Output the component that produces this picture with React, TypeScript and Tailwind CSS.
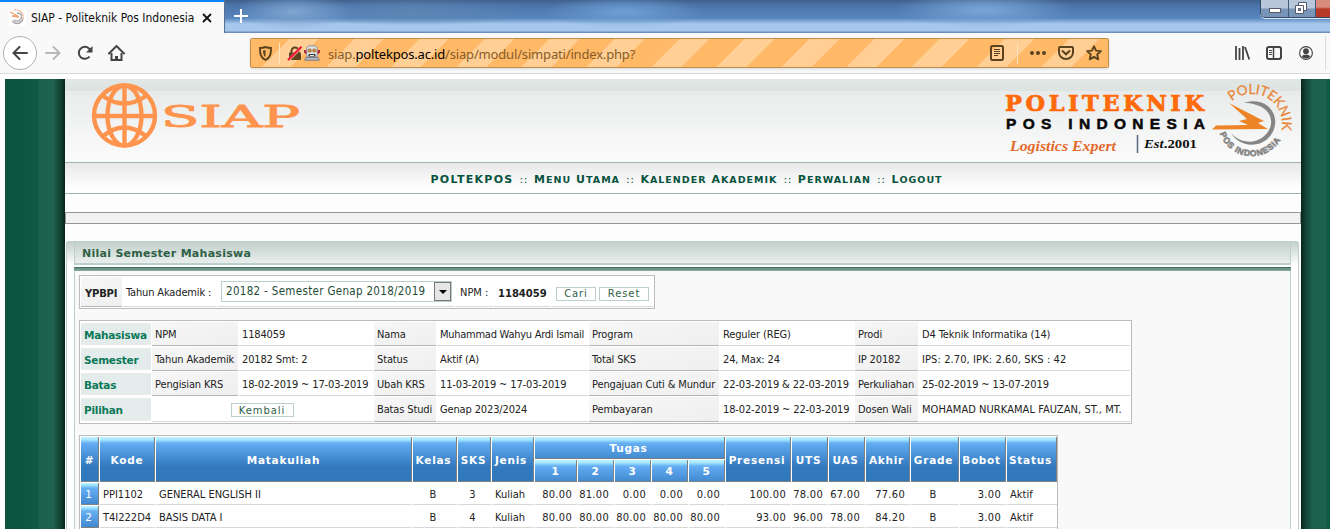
import React from 'react';

const ui = "font-['DejaVu_Sans_Condensed','DejaVu_Sans',sans-serif] [font-stretch:condensed]";
const vd = "font-['DejaVu_Sans',sans-serif] font-bold [font-stretch:normal]";

const infoRows: string[][] = [
  ['Mahasiswa', 'NPM', '1184059', 'Nama', 'Muhammad Wahyu Ardi Ismail', 'Program', 'Reguler (REG)', 'Prodi', 'D4 Teknik Informatika (14)'],
  ['Semester', 'Tahun Akademik', '20182 Smt: 2', 'Status', 'Aktif (A)', 'Total SKS', '24, Max: 24', 'IP 20182', 'IPS: 2.70, IPK: 2.60, SKS : 42'],
  ['Batas', 'Pengisian KRS', '18-02-2019 ~ 17-03-2019', 'Ubah KRS', '11-03-2019 ~ 17-03-2019', 'Pengajuan Cuti & Mundur', '22-03-2019 & 22-03-2019', 'Perkuliahan', '25-02-2019 ~ 13-07-2019'],
  ['Pilihan', '', 'Kembali', 'Batas Studi', 'Genap 2023/2024', 'Pembayaran', '18-02-2019 ~ 22-03-2019', 'Dosen Wali', 'MOHAMAD NURKAMAL FAUZAN, ST., MT.'],
];
const lastColumnTracking = ['tracking-[-0.1px]', 'tracking-[0.1px]', 'tracking-[-0.12px]', 'tracking-[0.06px]'];

const courses: string[][] = [
  ['1', 'PPI1102', 'GENERAL ENGLISH II', 'B', '3', 'Kuliah', '80.00', '81.00', '0.00', '0.00', '0.00', '100.00', '78.00', '67.00', '77.60', 'B', '3.00', 'Aktif'],
  ['2', 'T4I222D4', 'BASIS DATA I', 'B', '4', 'Kuliah', '80.00', '80.00', '80.00', '80.00', '80.00', '93.00', '96.00', '78.00', '84.20', 'B', '3.00', 'Aktif'],
];
const centered = [3, 4, 15];
const right = [6, 7, 8, 9, 10, 11, 12, 13, 14, 16];

function Button({ children, className }: { children: React.ReactNode; className: string }) {
  return (
    <button className={`${className} flex h-[14px] items-center justify-center border border-[#bccfca] bg-white pt-px font-['DejaVu_Sans',sans-serif] text-[10px] leading-none tracking-[0.9px] text-[#2f6046] [font-stretch:normal]`}>
      {children}
    </button>
  );
}

function Head({ children, className = '' }: { children: React.ReactNode; className?: string }) {
  return (
    <div className={`${vd} ${className} flex items-center justify-center overflow-hidden whitespace-nowrap border-b border-r border-[#808080] bg-[linear-gradient(180deg,#c4f2ff_0px,#a0e4ff_3px,#67b0f4_6px,#5ba3ea_10px,#3178bd_30px)] pt-[2px] text-[10.5px] leading-none tracking-[0.75px] text-white`}>
      {children}
    </div>
  );
}

function BrowserTop() {
  return (
    <>
      <div className="flex h-[33px] bg-[linear-gradient(180deg,#3f608b_0px,#4b73a8_5px,#5685bd_18px,#a8c8eb_24px,#a6c6ec_31px,#6b8fba_32px)]">
        <div className={`${ui} flex h-[33px] w-[224px] items-center border-t-2 border-t-[#0a84ff] bg-[#f9f9f9] pl-[9px] shadow-[1px_0_0_#57708f]`}>
          <svg width="17" height="17" viewBox="0 0 17 17" className="bg-white" fill="none">
            <path d="M1 3l8 4-6 0 7 1" stroke="#f0a070" strokeWidth="1.3" />
            <path d="M5 1c7-1 10 4 9 9" stroke="#f0b490" strokeWidth="1.3" strokeDasharray="2 .6" />
            <path d="M8 4c5 0 6 4 3 7-2 2-5 1-6 0M3 12c4 4 9 3 11-2" stroke="#a5a5a5" strokeWidth="1.3" />
          </svg>
          <span className="ml-[5px] w-[163px] whitespace-nowrap text-[12px] tracking-[-0.02px] text-[#111]">SIAP - Politeknik Pos Indonesia</span>
          <svg width="10" height="10" viewBox="0 0 10 10" className="ml-[8px]"><path d="M1 1l8 8M9 1L1 9" stroke="#111" strokeWidth="1.8" /></svg>
        </div>
        <div className="flex flex-1 justify-between bg-[radial-gradient(ellipse_60px_18px_at_70px_12px,#7fa5d0,transparent),radial-gradient(ellipse_120px_14px_at_190px_12px,#5d86b3,transparent),radial-gradient(ellipse_80px_16px_at_400px_12px,#6e9fd4,transparent),radial-gradient(ellipse_90px_18px_at_760px_10px,#7aa5d8,transparent)]">
          <svg width="14" height="14" viewBox="0 0 14 14" className="ml-[10px] mt-[9px]"><path d="M7 0v14M0 7h14" stroke="#fff" strokeWidth="2" /></svg>
          <div className="flex h-[18px] w-[70px] overflow-hidden rounded-bl-[5px] border-b border-l border-[#344b68] bg-[#8ca9c9] shadow-[0_1px_0_#d7e7f7]">
            <div className="w-[28px] border-r border-[#415b7b] bg-[linear-gradient(180deg,#b8c8da_8px,#7895b7_9px)] pl-[8px] pt-[8px]"><div className="h-[5px] w-[12px] border border-[#555a68] bg-white" /></div>
            <div className="w-[27px] border-r border-[#415b7b] bg-[linear-gradient(180deg,#b8c8da_8px,#7895b7_9px)] pl-[6px] pt-[2px]">
              <svg width="13" height="13" viewBox="0 0 13 13"><path d="M3.5.5h8v8h-8z" fill="#fff" stroke="#555a68" /><path d="M.5 3.500h8v8h-8z" fill="#fff" stroke="#555a68" /><path d="M3.500 6.500h2v2h-2z" fill="#8298b5" stroke="#555a68" /></svg>
            </div>
            <div className="flex-1 bg-[linear-gradient(180deg,#d98b7d_7px,#b83b2a_9px)]" />
          </div>
        </div>
      </div>
      <div className="flex h-[41px] items-center border-b border-[#dadadc] bg-[#f9f9f9]">
        <div className="ml-[3px] flex size-[34px] shrink-0 items-center justify-center rounded-full border border-[#b0b0b0] bg-white">
          <svg width="16" height="14" viewBox="0 0 16 14" fill="none" stroke="#444" strokeWidth="2"><path d="M15 7H1.500M7.500 1l-6 6 6 6" strokeLinecap="round" /></svg>
        </div>
        <svg className="ml-[8px]" width="16" height="14" viewBox="0 0 16 14" fill="none" stroke="#b8b8b9" strokeWidth="2"><path d="M1 7h13.500M8.500 1l6 6-6 6" strokeLinecap="round" /></svg>
        <svg className="ml-[16px]" width="16" height="16" viewBox="0 0 16 16" fill="none" stroke="#444" strokeWidth="2"><path d="M12.600 11.500A6 6 0 1 1 12 3.500L14 6" /><path d="M15.500 1v6.500H9z" fill="#444" stroke="none" /></svg>
        <svg className="ml-[15px]" width="17" height="16" viewBox="0 0 17 16" fill="none" stroke="#444" strokeWidth="2"><path d="M1 8.500L8.500 1 16 8.500" strokeLinecap="round" /><path d="M3.500 8v7h10V8" /><path d="M8.500 15v-4" strokeWidth="3" /></svg>
        <div className="ml-[125px] flex h-[30px] w-[859px] shrink-0 items-center rounded-[2px] border border-[#c08e4a] bg-[repeating-linear-gradient(135deg,#ffcf95_0px,#ffcf95_2px,#ffb967_2px,#ffb967_27px,#ffcf95_27px,#ffcf95_46px)] shadow-[0_1px_3px_#0002]">
          <svg className="ml-[8px]" width="13" height="15" viewBox="0 0 13 15" fill="none" stroke="#5b4320" strokeWidth="1.900"><path d="M6.500 1c2 .8 3.500 1 5.500 1 0 6-.6 9.500-5.500 12C1.600 11.500 1 8 1 2c2 0 3.500-.2 5.500-1z" /><path d="M6.500 4v7C4.500 10 4 7 4 4.500z" fill="#5b4320" stroke="none" /></svg>
          <div className="ml-[7px] h-[21px] w-px bg-[#ffe4c0]" />
          <svg className="ml-[7px]" width="16" height="15" viewBox="0 0 16 15"><path d="M4.500 7V5a3.500 3.500 0 0 1 7 0v2" fill="none" stroke="#5b4320" strokeWidth="2" /><rect x="2" y="6.500" width="12" height="7.500" rx="1" fill="#5b4320" /><path d="M1 14.500L14.500 1" stroke="#ffbd70" strokeWidth="3" /><path d="M1 14L14.500.8" stroke="#f01044" strokeWidth="1.900" /></svg>
          <svg className="ml-px" width="16" height="16" viewBox="0 0 16 16"><path d="M0 5.500h2.500v3H1.500L0 7zM16 5.500h-2.500v3h1L16 7z" fill="#c51c35" stroke="#8c1428" strokeWidth=".5" /><path d="M4.500.8h7l1.700 2v9.400H2.800V2.800z" fill="#dfe1e5" stroke="#787d88" strokeWidth=".8" /><path d="M2 12.500h12l1.300 2.700H.7z" fill="#b7bcc6" stroke="#676c78" strokeWidth=".8" /><circle cx="5.800" cy="5.500" r="1.600" fill="#f38d1c" stroke="#59472d" strokeWidth=".6" /><circle cx="10.200" cy="5.500" r="1.600" fill="#f38d1c" stroke="#59472d" strokeWidth=".6" /><path d="M4.500 11.500v-1.700l1-.8h5l1 .8v1.700z" fill="#333" /><path d="M6 10.500h4" stroke="#eee" /></svg>
          <div className="ml-[8px] whitespace-nowrap pt-[2px] font-['Noto_Sans',sans-serif] text-[13px] leading-none tracking-[-0.17px] text-[#875c28]">siap.<span className="text-black">poltekpos.ac.id</span>/siap/modul/simpati/index.php?</div>
          <div className="ml-auto mr-[6px] flex items-center text-[#5b4320]">
            <svg width="14" height="16" viewBox="0 0 14 16" fill="none" stroke="currentColor"><rect x="1" y="1" width="12" height="14" rx="1.500" strokeWidth="2" /><path d="M4 4.500h6M4 6.500h6M4 8.500h6M4 10.500h4" /></svg>
            <div className="ml-[13px] h-[21px] w-px bg-[#ffe4c0]" />
            <svg className="ml-[12px]" width="16" height="4" viewBox="0 0 16 4" fill="currentColor"><circle cx="2" cy="2" r="2" /><circle cx="8" cy="2" r="2" /><circle cx="14" cy="2" r="2" /></svg>
            <svg className="ml-[12px]" width="16" height="14" viewBox="0 0 16 14" fill="none" stroke="currentColor" strokeWidth="2"><path d="M2 1h12c.7 0 1 .4 1 1v4.500C15 10 12 13 8 13S1 10 1 6.500V2c0-.6.3-1 1-1z" /><path d="M4.500 5L8 8.300 11.500 5" strokeLinecap="round" /></svg>
            <svg className="ml-[12px]" width="16" height="16" viewBox="0 0 16 16" fill="none" stroke="currentColor" strokeWidth="1.800" strokeLinejoin="round"><path d="M8 1.200l2 4.500 4.900.5-3.700 3.300 1.100 4.900L8 11.900l-4.300 2.500 1.100-4.900L1.100 6.200 6 5.700z" /></svg>
          </div>
        </div>
        <svg className="ml-[126px] shrink-0" width="15" height="14" viewBox="0 0 15 14" stroke="#444" strokeWidth="1.800"><path d="M1 0v14M4.500 2v12M8 0v14M10 1l4.300 12.500" /></svg>
        <svg className="ml-[16px] shrink-0" width="16" height="14" viewBox="0 0 16 14" fill="none" stroke="#444"><rect x="1" y="1" width="14" height="12" rx="2" strokeWidth="2" /><path d="M7.500 1v12" strokeWidth="1.500" /><path d="M3 4.500h3M3 6.500h3M3 8.500h3" /></svg>
        <svg className="ml-[17px] shrink-0" width="14" height="14" viewBox="0 0 14 14"><circle cx="7" cy="7" r="6.400" fill="none" stroke="#444" strokeWidth="1.100" /><circle cx="7" cy="5.200" r="2.900" fill="#444" /><path d="M2.800 10.800c1-3.200 7.400-3.200 8.400 0C9 13 5 13 2.800 10.800z" fill="#444" /></svg>
        <div className="ml-[12px] h-[34px] w-px bg-[#dcdcdc]" />
      </div>
    </>
  );
}

function SiteHeader() {
  return (
    <div className="flex h-[83px] shrink-0 justify-between bg-[linear-gradient(180deg,#e0e7e4_0px,#dce3e1_12px,#e8ebea_12px,#fafafa_75px)]">
      <svg className="ml-[26px] mt-[3px]" width="212" height="68" viewBox="0 0 212 68">
        <g fill="none" stroke="#ff944f" strokeWidth="4.400"><ellipse cx="33.500" cy="33.500" rx="30.500" ry="30" /><ellipse cx="33.500" cy="33.500" rx="17" ry="30" /><path d="M33.500 3v61M3 34h61" /><path d="M12 14q21 15 43 0M12 54q21-17 43 0" /></g>
        <text x="70" y="45" textLength="139" lengthAdjust="spacingAndGlyphs" fontFamily="DejaVu Serif" fontSize="30" fill="#ff944f" stroke="#ff944f" strokeWidth=".9">SIAP</text>
      </svg>
      <svg className="mr-[6px] mt-[2px]" width="293" height="80" viewBox="1002 81 293 80">
        <text x="1005" y="111" textLength="199" lengthAdjust="spacing" fontFamily="DejaVu Serif" fontWeight="bold" fontSize="22.500" fill="#ff6a0a" stroke="#ff6a0a" strokeWidth=".7">POLITEKNIK</text>
        <text x="1006" y="129" textLength="199" fontFamily="Liberation Sans" fontWeight="bold" fontSize="15.500" fill="#080808" stroke="#080808" strokeWidth=".5">POS INDONESIA</text>
        <text x="1010" y="151" textLength="106" lengthAdjust="spacingAndGlyphs" fontFamily="Liberation Serif" fontStyle="italic" fontWeight="bold" fontSize="15" fill="#e26a2c">Logistics Expert</text>
        <path d="M1137.500 135v18" stroke="#5c6f82" strokeWidth="1.600" />
        <text x="1144" y="148" textLength="53" lengthAdjust="spacingAndGlyphs" fontFamily="Liberation Serif" fontWeight="bold" fontSize="12.500" fill="#111"><tspan fontStyle="italic">Est</tspan>.2001</text>
        <defs><path id="arcTop" d="M1232 101.500A30 30 0 0 1 1279 137" /><path id="arcBottom" d="M1220 133.500A33.500 33.500 0 0 0 1282.500 136" /></defs>
        <path d="M1244 103c20-7 36 9 30 26-6 18-32 22-43 4 12 14 33 10 39-5 5-14-7-25-26-25z" fill="#858585" />
        <path d="M1229 103l35 18-6 2 10 6-56 .5 4-4 32-.5-9-4 8-2z" fill="#ee8428" />
        <text fontFamily="Lato" fontSize="13.500" fill="#e8873a" stroke="#e8873a" strokeWidth=".3"><textPath href="#arcTop" textLength="75">POLITEKNIK</textPath></text>
        <text fontFamily="Liberation Sans" fontWeight="bold" fontSize="8.500" fill="#858585" stroke="#858585" strokeWidth=".6"><textPath href="#arcBottom" textLength="76">POS INDONESIA</textPath></text>
      </svg>
    </div>
  );
}

const menu = ['Menu Utama', 'Kalender Akademik', 'Perwalian', 'Logout'];

function Nav() {
  return (
    <nav className={`${vd} flex h-[32px] shrink-0 items-baseline justify-center gap-[6px] whitespace-pre border-y border-[#9ab5ab] bg-[linear-gradient(180deg,#e8e8e8,#fff_26px)] pl-[7px] pt-[11px] text-[11px] leading-none tracking-[1.1px] text-[#07533e]`}>
      <span className="tracking-[1.3px]">POLTEKPOS</span>
      {menu.map((item) => (
        <React.Fragment key={item}>
          <span className="font-normal tracking-[0.5px]">::</span>
          <span className="text-[9.5px] uppercase tracking-[1px]">
            {item.split(' ').map((word, i) => (
              <span key={word} className={`${i > 0 ? 'ml-[5px]' : ''} inline-block first-letter:text-[11px]`}>{word}</span>
            ))}
          </span>
        </React.Fragment>
      ))}
    </nav>
  );
}

const label = 'border-b border-[#b5b5b5] bg-[linear-gradient(165deg,#f7f7f7,#efefef)]';
const value = 'border-b border-[#d8d8d8] bg-white';

function FormBar() {
  return (
    <div className={`${ui} flex h-[34px] w-[576px] gap-px border border-[#bcbcbc] bg-white p-px text-[11px] text-[#222] whitespace-nowrap`}>
      <div className={`${label} ${vd} flex w-[41px] items-center pl-[4px] pt-[3px] text-[10px] tracking-[-0.2px]`}>YPBPI</div>
      <div className={`${value} flex w-[93px] items-center pl-[3px] pt-[3px] tracking-[-0.15px]`}>Tahun Akademik :</div>
      <div className={`${value} flex w-[238px] items-center pl-[4px]`}>
        <div className="flex h-[21px] w-[231px] items-center justify-between border border-[#bccfca] bg-white pl-[4px] font-['DejaVu_Sans_Condensed',sans-serif] text-[11.500px] tracking-[0.32px] text-[#1f4d36]">
          <span>20182 - Semester Genap 2018/2019</span>
          <span className="flex h-[19px] w-[17px] items-center justify-center border border-[#777] bg-[#e6e6e6]"><svg width="8" height="4" viewBox="0 0 8 4"><path d="M0 0h8L4 4z" /></svg></span>
        </div>
      </div>
      <div className={`${value} flex w-[37px] items-center pl-[4px] pt-[3px]`}>NPM :</div>
      <div className={`${value} ${vd} flex w-[57px] items-center pl-[4px] pt-[3px] text-[10px]`}>1184059</div>
      <div className={`${value} flex flex-1 items-center gap-[3px] pl-[4px] pt-[4px]`}><Button className="w-[40px]">Cari</Button><Button className="w-[50px]">Reset</Button></div>
    </div>
  );
}

function InfoTable() {
  return (
    <div className={`${ui} grid h-[104px] w-[1053px] grid-cols-[70px_86px_134px_62px_151px_130px_134px_63px_211px] grid-rows-[24px_24px_24px_25px] gap-px border border-[#bcbcbc] bg-white p-px text-[11px] whitespace-nowrap text-[#222]`}>
      {infoRows.map((row, r) =>
        row.map((t, c) => {
          if (r === 3 && c === 1) return null;
          if (r === 3 && c === 2) return <div key={c} className={`${value} col-span-2 flex items-center justify-center pr-px pt-[2px]`}><Button className="w-[63px]">Kembali</Button></div>;
          if (c === 0) return <div key={c} className={`${vd} my-px flex items-center bg-[#e4eceb] pl-[3px] pt-[3px] text-[10.5px] tracking-[-0.25px] text-[#0b7858]`}>{t}</div>;
          const tracking = c === 8 ? lastColumnTracking[r] : r === 0 && c === 4 ? 'tracking-[-0.26px]' : 'tracking-[-0.14px]';
          return <div key={c} className={`${c % 2 ? label : value} flex items-center pl-[3px] pt-[3px] ${tracking}`}>{t}</div>;
        })
      )}
    </div>
  );
}

function GradeTable() {
  return (
    <div className="grid w-[979px] shrink-0 grid-cols-[18px_55px_256px_44px_33px_42px_42px_36px_36px_36px_36px_65px_36px_36px_44px_48px_46px_50px] grid-rows-[22px_22px_22px_22px_22px] gap-px border border-[#bcbcbc] bg-white p-px">
      <Head className="row-span-2">#</Head>
      <Head className="row-span-2">Kode</Head>
      <Head className="row-span-2">Matakuliah</Head>
      <Head className="row-span-2 pr-[2px]">Kelas</Head>
      <Head className="row-span-2 pr-px">SKS</Head>
      <Head className="row-span-2 pr-[3px]">Jenis</Head>
      <Head className="col-span-5 pr-[2px]">Tugas</Head>
      {['Presensi', 'UTS', 'UAS', 'Akhir', 'Grade', 'Bobot', 'Status'].map((t) => <Head key={t} className="row-span-2 pr-[2px]">{t}</Head>)}
      {['1', '2', '3', '4', '5'].map((t) => <Head key={t}>{t}</Head>)}
      {courses.map((row) =>
        row.map((t, c) =>
          c === 0 ? (
            <div key={c} className="flex items-center justify-center border-b border-r border-[#808080] bg-[linear-gradient(180deg,#c4f2ff_0px,#a0e4ff_2px,#67b0f4_5px,#5ba3ea_10px,#3f86cb_22px)] pr-[2px] pt-[2px] font-['DejaVu_Sans',sans-serif] text-[10.5px] leading-none text-white">{t}</div>
          ) : (
            <div key={c} className={`${ui} flex items-center border-b border-[#d8d8d8] pt-[3px] text-[11px] whitespace-nowrap text-[#222] ${centered.includes(c) ? 'justify-center pr-[4px]' : right.includes(c) ? 'justify-end pr-[5px] tracking-[0.3px]' : 'pl-[3px]'}`}>{t}</div>
          )
        )
      )}
    </div>
  );
}

export default function App() {
  return (
    <div className="flex h-[529px] w-[1330px] flex-col overflow-hidden bg-white">
      <BrowserTop />
      <div className="mt-[5px] flex h-[450px] pl-[5px]">
        <div className="w-[60px] shrink-0 bg-[linear-gradient(90deg,#0d5540_0px,#0d5943_33px,#1c614e_34px,#1e6350_48px,#123f31_56px,#07241a_60px)]" />
        <div className="flex w-[1236px] shrink-0 flex-col bg-[#fdfdfd]">
          <SiteHeader />
          <Nav />
          <div className="mt-[18px] h-[12px] shrink-0 border border-[#969696] bg-[#f2f2f2]" />
          <div className="ml-px mr-[2px] mt-[17px] flex h-[300px] flex-col rounded-t-[3px] border-x border-[#bccfca] bg-[linear-gradient(180deg,#c0cfca,#fff_24px)] px-[7px]">
            <div className={`${vd} flex h-[24px] shrink-0 items-center border-x border-b-2 border-[#bccfca] bg-[linear-gradient(180deg,#c0cfca,#e9eeec)] pl-[7px] pt-[4px] text-[11px] tracking-[0.27px] text-[#2f6046]`}>Nilai Semester Mahasiswa</div>
            <div className="mt-[2px] h-[4px] shrink-0 border-y border-b-[#85a89c] border-t-[#43705f] bg-[#6f9586]" />
            <div className="flex flex-1 flex-col border-x border-[#bccfca] bg-[#f9f9f9] pl-[4px] pt-[4px]">
              <FormBar />
              <div className="h-[11px] shrink-0" />
              <InfoTable />
              <div className="h-[11px] shrink-0" />
              <GradeTable />
            </div>
          </div>
        </div>
        <div className="w-[29px] shrink-0 bg-[linear-gradient(90deg,#07241a_0px,#123f31_4px,#1c614e_12px,#1c614e_25px,#0d5943_26px)]" />
      </div>
    </div>
  );
}
